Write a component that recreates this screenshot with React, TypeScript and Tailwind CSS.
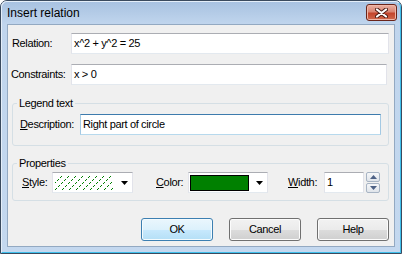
const tbox =
  "h-[21px] bg-white border border-t-[#abadb3] border-x-[#e2e3ea] border-b-[#e3e9ef] flex items-center"

function Hatch() {
  const dots: { x: number; y: number }[] = []
  for (let x0 = -14; x0 < 58; x0 += 7) {
    for (let k = 0; k < 15; k++) {
      if (k % 3 === 2) continue
      const x = x0 + k
      const y = 14 - k
      if (x >= 0 && x < 58) dots.push({ x, y })
    }
  }
  return (
    <svg width="58" height="15" viewBox="0 0 58 15" className="block" shapeRendering="crispEdges">
      {dots.map((d) => (
        <rect key={d.x + "-" + d.y} x={d.x} y={d.y} width="1" height="1" fill="#008000" />
      ))}
    </svg>
  )
}

function Arrow() {
  return (
    <svg width="7" height="4" viewBox="0 0 7 4" className="block">
      <path d="M0 0h7L3.5 4z" fill="#000" />
    </svg>
  )
}

function SpinArrow({ up }: { up?: boolean }) {
  return (
    <svg width="7" height="4" viewBox="0 0 7 4" className="block">
      <path d={up ? "M0 4h7L3.5 0z" : "M0 0h7L3.5 4z"} fill="#4d6185" />
    </svg>
  )
}

function Btn({ label, def }: { label: string; def?: boolean }) {
  return (
    <button
      className={
        def
          ? "w-[72px] h-[23px] rounded-[3px] border border-[#3c7fb1] bg-[linear-gradient(#eaf6fd_0%,#dcf1fc_50%,#c8e9fd_50%,#b4dff6_100%)] shadow-[inset_0_0_0_1px_#f4fbfe] text-[11px] text-black"
          : "w-[72px] h-[23px] rounded-[3px] border border-[#707070] bg-[linear-gradient(#f2f2f2_0%,#ebebeb_50%,#dddddd_50%,#cfcfcf_100%)] shadow-[inset_0_0_0_1px_#fcfcfc] text-[11px] text-black"
      }
    >
      {label}
    </button>
  )
}

export default function App() {
  return (
    <div className="w-[402px] h-[254px] rounded-t-[7px] border border-[#3a4a5e] bg-[#c3d7ee] font-['Liberation_Sans',Arial,sans-serif] text-[11px] text-black tracking-[-0.35px]">
      <div className="h-full flex flex-col rounded-t-[6px] border border-t-[#e4eef9] border-l-[#e4eef9] border-r-[#3fc0ec] border-b-[#3fc0ec] bg-[linear-gradient(180deg,#a8c2e1_0px,#c0d5ed_22px,#c4d8ef_100%)]">
        {/* title bar */}
        <div className="h-[22px] flex items-start justify-between pl-[5px] pr-[3px]">
          <span className="mt-[4px] text-[12px] leading-[14px] tracking-normal">Insert relation</span>
          <div className="mt-[2px] w-[31px] h-[17px] rounded-[3px] border border-[#6a2419] bg-[linear-gradient(#eab0a2_0%,#d98572_45%,#c4452c_55%,#cf6a4d_100%)] shadow-[inset_0_0_0_1px_#f0b7a8] flex items-center justify-center">
            <svg width="13" height="10" viewBox="0 0 13 10" className="block">
              <path d="M2 1.5l9 7M11 1.5l-9 7" stroke="#4a1a12" strokeWidth="4" strokeLinecap="round" />
              <path d="M2 1.5l9 7M11 1.5l-9 7" stroke="#fff" strokeWidth="2.2" strokeLinecap="round" />
            </svg>
          </div>
        </div>

        {/* client area */}
        <div className="flex-1 mx-[5px] mb-[5px] border border-[#93a9c2] bg-[#f0f0f0] flex flex-col pt-[8px]">
          <div className="flex items-center pl-[4px] pr-[5px]">
            <span className="w-[59px]">Relation:</span>
            <div className={tbox + " flex-1 pl-[2px]"}>x^2 + y^2 = 25</div>
          </div>
          <div className="flex items-center mt-[10px] pl-[3px] pr-[7px]">
            <span className="w-[60px]">Constraints:</span>
            <div className={tbox + " flex-1 pl-[2px]"}>x &gt; 0</div>
          </div>

          <fieldset className="ml-[4px] mr-[5px] mt-[11px] rounded-[3px] border border-[#d5dfe5] pl-[4px] pr-[7px] pb-[10px]">
            <legend className="px-[2px] leading-[14px]">Legend text</legend>
            <div className="flex items-center mt-[4px] ml-[3px]">
              <span className="w-[60px]">
                <span className="underline">D</span>escription:
              </span>
              <div className="h-[21px] flex-1 flex items-center pl-[2px] bg-white border border-t-[#3d7bad] border-x-[#a4c9e3] border-b-[#b7d9ed]">
                Right part of circle
              </div>
            </div>
          </fieldset>

          <fieldset className="ml-[4px] mr-[5px] mt-[10px] rounded-[3px] border border-[#d5dfe5] pl-[4px] pr-[7px] pb-[7px]">
            <legend className="px-[2px] leading-[14px]">Properties</legend>
            <div className="flex items-center mt-[2px] ml-[5px]">
              <span className="w-[30px]">
                <span className="underline">S</span>tyle:
              </span>
              <div className={tbox + " w-[81px] pl-[2px]"}>
                <Hatch />
                <div className="flex-1" />
                <div className="w-[15px] flex justify-center">
                  <Arrow />
                </div>
              </div>

              <span className="ml-[23px] w-[32px]">
                <span className="underline">C</span>olor:
              </span>
              <div className={tbox + " w-[80px] pl-[1px]"}>
                <div className="w-[59px] h-[16px] border border-black bg-[#008000]" />
                <div className="flex-1" />
                <div className="w-[15px] flex justify-center">
                  <Arrow />
                </div>
              </div>

              <span className="ml-[20px] w-[36px]">
                <span className="underline">W</span>idth:
              </span>
              <div className={tbox + " w-[40px] pl-[2px]"}>1</div>
              <div className="ml-[2px] w-[14px] h-[21px] flex flex-col justify-between">
                <div className="h-[10px] rounded-[2px] border border-[#a7b4c4] bg-[linear-gradient(#f6f7f9,#dfe4ea)] flex items-center justify-center">
                  <SpinArrow up />
                </div>
                <div className="h-[10px] rounded-[2px] border border-[#a7b4c4] bg-[linear-gradient(#f6f7f9,#dfe4ea)] flex items-center justify-center">
                  <SpinArrow />
                </div>
              </div>
            </div>
          </fieldset>

          <div className="mt-[17px] flex justify-end gap-[16px] pr-[5px]">
            <Btn label="OK" def />
            <Btn label="Cancel" />
            <Btn label="Help" />
          </div>
        </div>
      </div>
    </div>
  )
}
